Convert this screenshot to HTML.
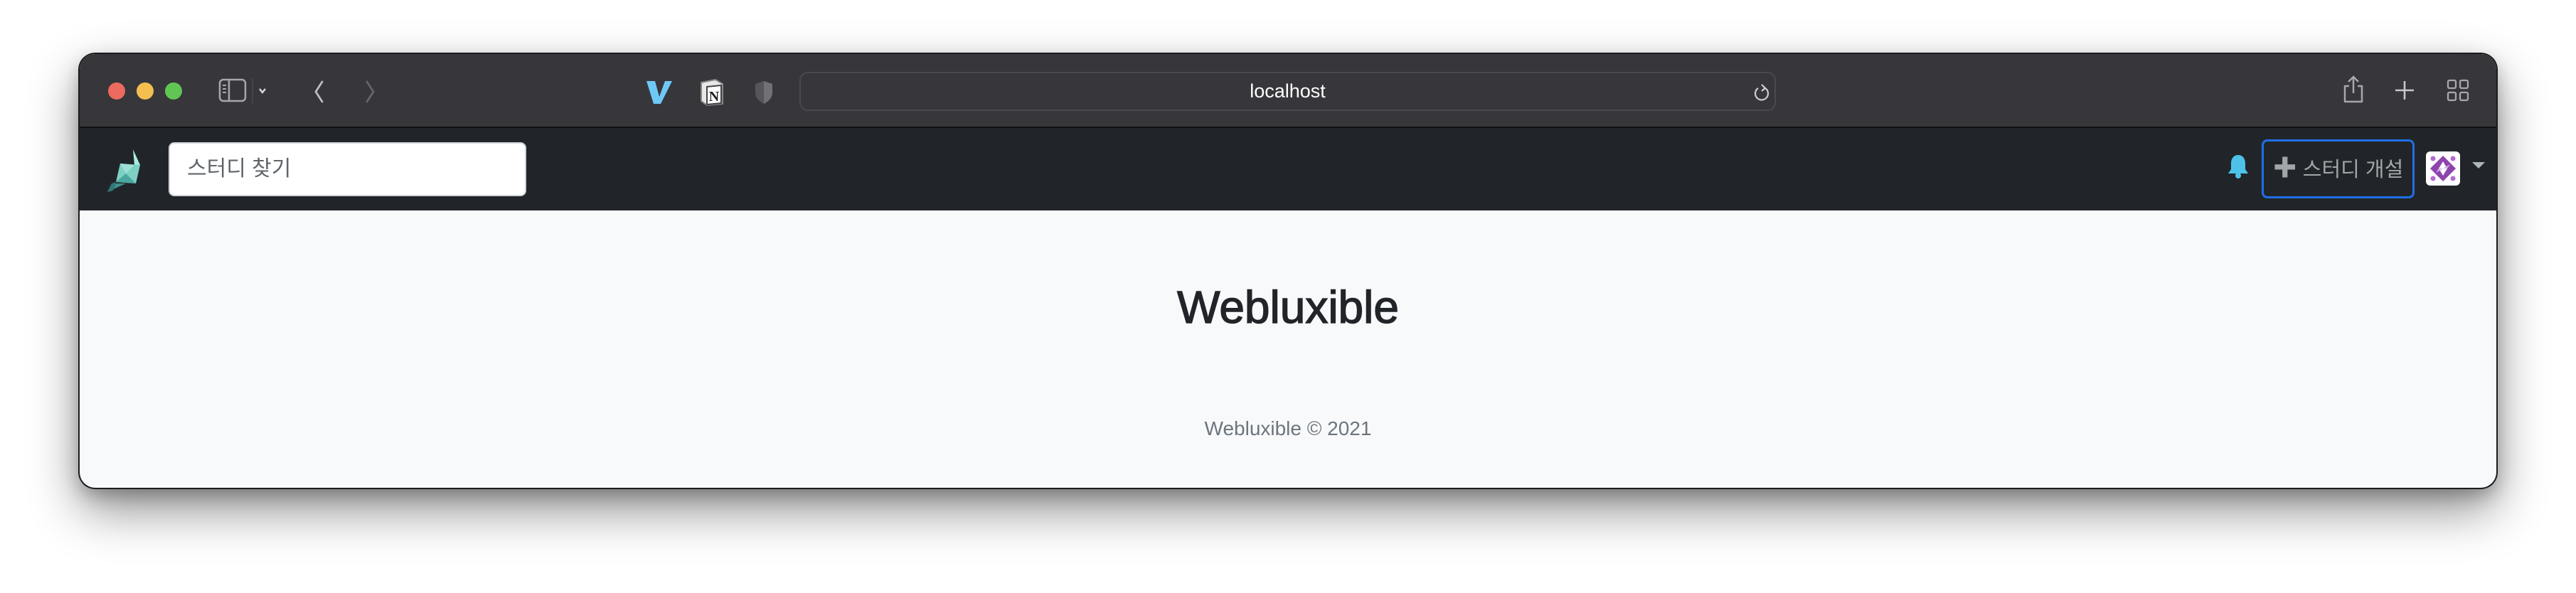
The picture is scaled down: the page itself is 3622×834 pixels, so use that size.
<!DOCTYPE html>
<html><head><meta charset="utf-8"><style>
*{margin:0;padding:0;box-sizing:border-box}
html,body{width:3622px;height:834px;background:#fff;overflow:hidden;font-family:"Liberation Sans","Noto Sans CJK KR",sans-serif}
.win{position:absolute;left:112px;top:76px;width:3398px;height:610px;border-radius:22px;overflow:hidden;background:#f8f9fa;box-shadow:0 0 0 2px #1c1c1e,0 30px 70px rgba(0,0,0,.45),0 10px 25px rgba(0,0,0,.25)}
.tb{position:absolute;left:0;top:0;width:100%;height:104px;background:#37363b;border-bottom:2px solid #111}
.nav{position:absolute;left:0;top:104px;width:100%;height:116px;background:#212529}
.dot{position:absolute;top:40px;width:24px;height:24px;border-radius:50%}
.abs{position:absolute}
.url{position:absolute;left:1012px;top:25px;width:1373px;height:55px;border:2px solid #4a4950;border-radius:12px;background:#37363b;color:#fff;font-size:27px;text-align:center;line-height:51px}
.search{position:absolute;left:125px;top:20px;width:503px;height:76px;background:#fff;border:2px solid #cfd4da;border-radius:8px;font-size:30px;color:#5f656b;line-height:72px;padding-left:24px}
.btn{position:absolute;left:3068px;top:16px;width:215px;height:83px;border:3px solid #1f6fe8;border-radius:8px;color:#a3a6a9;font-size:29px;line-height:77px;text-align:center;white-space:nowrap}
h1{position:absolute;left:0;width:100%;top:319px;text-align:center;font-size:64px;font-weight:normal;color:#212529;-webkit-text-stroke:1.4px #212529}
.foot{position:absolute;left:0;width:100%;top:511px;text-align:center;font-size:28px;color:#6c757d}
</style></head><body>
<div class="win">
 <div class="tb">
  <div class="dot" style="left:40px;background:#ec6a5e"></div>
  <div class="dot" style="left:80px;background:#f4bf4f"></div>
  <div class="dot" style="left:120px;background:#61c554"></div>
  <svg class="abs" style="left:190px;top:34px" width="90" height="36" viewBox="0 0 90 36"><rect x="7" y="2" width="36" height="30" rx="5" fill="none" stroke="#a8a7ad" stroke-width="2.5"/><line x1="20" y1="2" x2="20" y2="32" stroke="#a8a7ad" stroke-width="2.5"/><line x1="11" y1="10" x2="16" y2="10" stroke="#a8a7ad" stroke-width="2"/><line x1="11" y1="15" x2="16" y2="15" stroke="#a8a7ad" stroke-width="2"/><line x1="11" y1="20" x2="16" y2="20" stroke="#a8a7ad" stroke-width="2"/><line x1="53" y1="0" x2="53" y2="36" stroke="#4a4950" stroke-width="1.5"/><path d="M63 15 l4 5 l4 -5" fill="none" stroke="#d8d7dc" stroke-width="2.5"/></svg>
  <svg class="abs" style="left:325px;top:36px" width="90" height="34" viewBox="0 0 90 34"><path d="M16 3 L7 17 L16 31" fill="none" stroke="#bdbcc2" stroke-width="2.8" stroke-linecap="round"/><path d="M79 3 L88 17 L79 31" fill="none" stroke="#66656b" stroke-width="2.8" stroke-linecap="round"/></svg>
  <svg class="abs" style="left:795px;top:36px" width="40" height="36" viewBox="0 0 40 36"><path d="M2 2 H14 L20 24 L28 2 H38 L22 34 H12 Z" fill="#6ec9f7"/></svg>
  <svg class="abs" style="left:870px;top:34px" width="38" height="40" viewBox="0 0 38 40"><path d="M4 6 L24 2 L34 8 V36 L12 38 L4 32 Z" fill="#e8e8e8" stroke="#888" stroke-width="2"/><path d="M12 12 L32 10 V35 L12 37 Z" fill="#fff" stroke="#444" stroke-width="2"/><text x="22" y="32" font-size="20" font-weight="bold" font-family="Liberation Serif" text-anchor="middle" fill="#222">N</text></svg>
  <svg class="abs" style="left:946px;top:36px" width="32" height="36" viewBox="0 0 32 36"><path d="M16 2 L28 6 V18 C28 26 22 31 16 34 C10 31 4 26 4 18 V6 Z" fill="#55555a"/><path d="M16 2 V34 C22 31 28 26 28 18 V6 Z" fill="#707075"/></svg>
  <div class="url">localhost</div>
  <svg class="abs" style="left:2352px;top:40px" width="26" height="30" viewBox="0 0 26 30"><path d="M18 8 A9 9 0 1 1 8 8" fill="none" stroke="#cfced3" stroke-width="2.2"/><path d="M13 3 L18 8 L13 12" fill="none" stroke="#cfced3" stroke-width="2.2"/></svg>
  <svg class="abs" style="left:3180px;top:30px" width="34" height="40" viewBox="0 0 34 40"><path d="M11 15 H5 V37 H29 V15 H23" fill="none" stroke="#a8a7ad" stroke-width="2.5" stroke-linejoin="round"/><path d="M17 25 V2 M10 9 L17 2 L24 9" fill="none" stroke="#a8a7ad" stroke-width="2.5"/></svg>
  <svg class="abs" style="left:3254px;top:36px" width="30" height="30" viewBox="0 0 30 30"><path d="M15 2 V28 M2 15 H28" stroke="#c8c7cc" stroke-width="2.6"/></svg>
  <svg class="abs" style="left:3328px;top:35px" width="32" height="32" viewBox="0 0 32 32"><rect x="2" y="2" width="11" height="11" rx="2" fill="none" stroke="#a8a7ad" stroke-width="2.3"/><rect x="19" y="2" width="11" height="11" rx="2" fill="none" stroke="#a8a7ad" stroke-width="2.3"/><rect x="2" y="19" width="11" height="11" rx="2" fill="none" stroke="#a8a7ad" stroke-width="2.3"/><rect x="19" y="19" width="11" height="11" rx="2" fill="none" stroke="#a8a7ad" stroke-width="2.3"/></svg>
 </div>
 <div class="nav">
  <svg class="abs" style="left:35px;top:30px" width="54" height="60" viewBox="0 0 54 60"><polygon points="40,0 50,22 42,22" fill="#a8ece0"/><polygon points="22,20 50,22 44,48 16,46" fill="#7fd0c4"/><polygon points="22,20 42,22 30,34" fill="#9fe0d6"/><polygon points="16,46 44,48 30,34" fill="#4aa8a0"/><polygon points="10,48 30,48 4,60" fill="#3f8f8a"/><polygon points="4,60 10,48 16,46 12,58" fill="#2f7874"/></svg>
  <div class="search">스터디 찾기</div>
  <svg class="abs" style="left:3020px;top:36px" width="30" height="36" viewBox="0 0 30 36"><path d="M15 2 C8 2 5 8 5 14 V22 L1 28 H29 L25 22 V14 C25 8 22 2 15 2 Z" fill="#4dc3ea"/><circle cx="15" cy="31" r="4" fill="#4dc3ea"/></svg>
  <div class="btn"><b style="font-size:34px;color:#a3a6a9">✚</b> 스터디 개설</div>
  <div class="abs" style="left:3299px;top:33px;width:48px;height:48px;background:#fff;border-radius:6px"><svg width="48" height="48" viewBox="0 0 48 48"><circle cx="10" cy="10" r="3.5" fill="#b26bd0"/><circle cx="38" cy="10" r="3.5" fill="#b26bd0"/><circle cx="10" cy="38" r="3.5" fill="#b26bd0"/><circle cx="38" cy="38" r="3.5" fill="#b26bd0"/><polygon points="24,6 42,24 24,42 6,24" fill="#8e44ad"/><polygon points="24,14 30,24 24,34 18,24" fill="#fff"/><polygon points="24,24 34,18 30,24" fill="#d6b3e6"/><polygon points="24,24 14,30 18,24" fill="#d6b3e6"/></svg></div>
  <svg class="abs" style="left:3364px;top:46px" width="18" height="12" viewBox="0 0 18 12"><polygon points="0,2 18,2 9,11" fill="#adb5bd"/></svg>
 </div>
 <h1>Webluxible</h1>
 <div class="foot">Webluxible © 2021</div>
</div>
</body></html>
